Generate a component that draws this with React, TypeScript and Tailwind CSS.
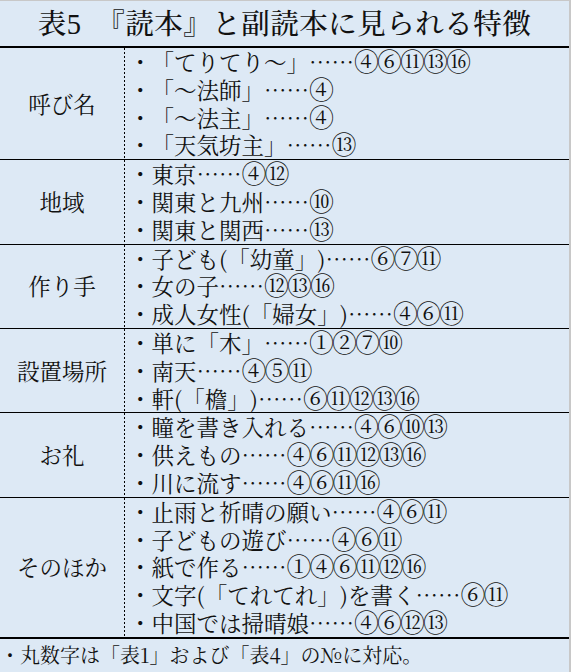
const rows: { label: string; items: string[] }[] = [
  {
    label: '呼び名',
    items: ['「てりてり～」……④⑥⑪⑬⑯', '「～法師」……④', '「～法主」……④', '「天気坊主」……⑬'],
  },
  {
    label: '地域',
    items: ['東京……④⑫', '関東と九州……⑩', '関東と関西……⑬'],
  },
  {
    label: '作り手',
    items: ['子ども(「幼童」)……⑥⑦⑪', '女の子……⑫⑬⑯', '成人女性(「婦女」)……④⑥⑪'],
  },
  {
    label: '設置場所',
    items: ['単に「木」……①②⑦⑩', '南天……④⑤⑪', '軒(「檐」)……⑥⑪⑫⑬⑯'],
  },
  {
    label: 'お礼',
    items: ['瞳を書き入れる……④⑥⑩⑬', '供えもの……④⑥⑪⑫⑬⑯', '川に流す……④⑥⑪⑯'],
  },
  {
    label: 'そのほか',
    items: [
      '止雨と祈晴の願い……④⑥⑪',
      '子どもの遊び……④⑥⑪',
      '紙で作る……①④⑥⑪⑫⑯',
      '文字(「てれてれ」)を書く……⑥⑪',
      '中国では掃晴娘……④⑥⑫⑬',
    ],
  },
]

const font = "font-['Noto_Serif_CJK_JP','Noto_Serif_JP','Noto_Sans_CJK_JP',serif]"

// Splits "text……①②" so the circled numbers can be drawn a little larger.
function Item({ text }: { text: string }) {
  const [head, nums] = text.split('……')
  return (
    <li className="h-[27.8px] leading-[27.8px] whitespace-nowrap">
      ・{head}……<span className="text-[25px] tracking-[-2px] leading-none">{nums}</span>
    </li>
  )
}

export default function App() {
  return (
    <div
      className={`w-[571px] h-[672px] bg-[#dde9f5] text-[#111] border-t border-r-2 border-[#c8c8c8] ${font} [text-spacing-trim:space-all] flex flex-col`}
    >
      <div className="h-[47px] shrink-0 flex items-center justify-center border-b-2 border-black">
        <h1 className="text-[28.5px] font-medium tracking-[0.5px] leading-none [text-spacing-trim:normal]">
          表<span className="font-['Liberation_Serif',serif]">5</span>　『読本』と副読本に見られる特徴
        </h1>
      </div>

      {rows.map((row, i) => (
        <div
          key={row.label}
          className={`grid shrink-0 grid-cols-[124px_1px_1fr] ${i < rows.length - 1 ? 'border-b border-black' : 'border-b-2 border-black'}`}
        >
          <div className="flex items-center justify-center text-[22.5px]">{row.label}</div>
          <div className="bg-[linear-gradient(to_bottom,black_50%,transparent_50%)] bg-[length:1px_4px]" />
          <ul className="pl-[4px] text-[22.5px]">
            {row.items.map((item) => (
              <Item key={item} text={item} />
            ))}
          </ul>
        </div>
      ))}

      <div className="flex-1 flex items-center text-[20px] leading-none">
        ・丸数字は「表1」および「表4」の№に対応。
      </div>
    </div>
  )
}
